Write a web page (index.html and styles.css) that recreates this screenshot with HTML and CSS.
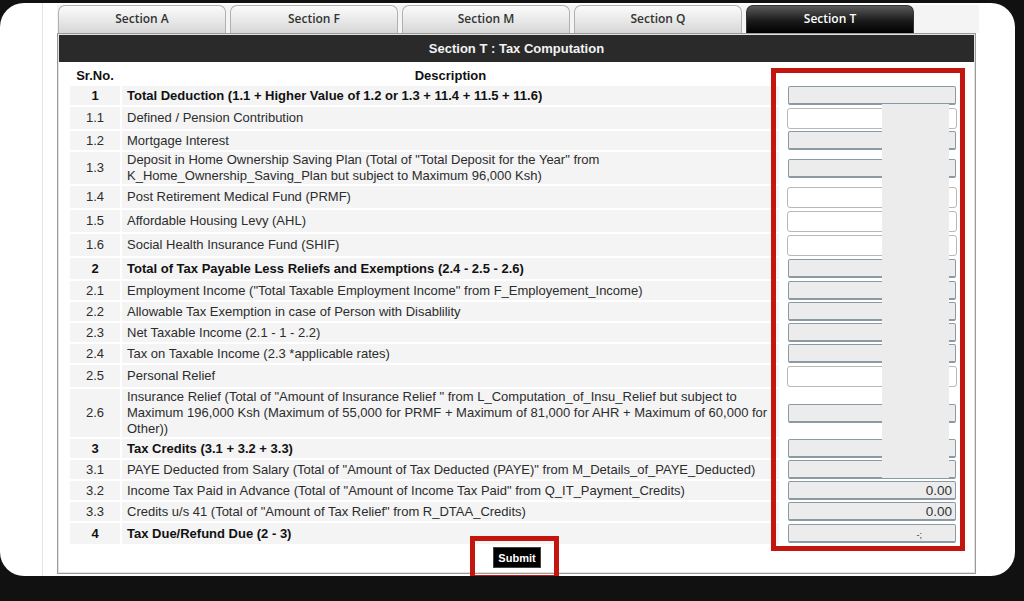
FILE: index.html
```html
<!DOCTYPE html>
<html>
<head>
<meta charset="utf-8">
<link rel="stylesheet" href="styles.css">
</head>
<body>
<div class="screen">
  <div class="page">
    <div class="tabs">
      <div class="tab">Section A</div>
      <div class="tab">Section F</div>
      <div class="tab">Section M</div>
      <div class="tab">Section Q</div>
      <div class="tab active">Section T</div>
    </div>
    <div class="panel">
      <div class="panel-head">Section T : Tax Computation</div>
      <div class="panel-body">
        <table class="grid">
          <thead>
            <tr><th class="sr">Sr.No.</th><th class="desc">Description</th><th class="val"></th></tr>
          </thead>
          <tbody>
            <tr class="b r20"><td class="sr">1</td><td class="desc">Total Deduction (1.1 + Higher Value of 1.2 or 1.3 + 11.4 + 11.5 + 11.6)</td><td class="val"><span class="ro"></span></td></tr>
            <tr class="r22"><td class="sr">1.1</td><td class="desc">Defined / Pension Contribution</td><td class="val"><span class="wi"></span></td></tr>
            <tr class="r20"><td class="sr">1.2</td><td class="desc">Mortgage Interest</td><td class="val"><span class="ro"></span></td></tr>
            <tr class="r32"><td class="sr">1.3</td><td class="desc">Deposit in Home Ownership Saving Plan (Total of "Total Deposit for the Year" from<br>K_Home_Ownership_Saving_Plan but subject to Maximum 96,000 Ksh)</td><td class="val"><span class="ro"></span></td></tr>
            <tr class="r22"><td class="sr">1.4</td><td class="desc">Post Retirement Medical Fund (PRMF)</td><td class="val"><span class="wi"></span></td></tr>
            <tr class="r22"><td class="sr">1.5</td><td class="desc">Affordable Housing Levy (AHL)</td><td class="val"><span class="wi"></span></td></tr>
            <tr class="r22"><td class="sr">1.6</td><td class="desc">Social Health Insurance Fund (SHIF)</td><td class="val"><span class="wi"></span></td></tr>
            <tr class="b r21"><td class="sr">2</td><td class="desc">Total of Tax Payable Less Reliefs and Exemptions (2.4 - 2.5 - 2.6)</td><td class="val"><span class="ro"></span></td></tr>
            <tr class="r20"><td class="sr">2.1</td><td class="desc">Employment Income ("Total Taxable Employment Income" from F_Employement_Income)</td><td class="val"><span class="ro"></span></td></tr>
            <tr class="r20"><td class="sr">2.2</td><td class="desc">Allowable Tax Exemption in case of Person with Disablility</td><td class="val"><span class="ro"></span></td></tr>
            <tr class="r20"><td class="sr">2.3</td><td class="desc">Net Taxable Income (2.1 - 1 - 2.2)</td><td class="val"><span class="ro"></span></td></tr>
            <tr class="r20"><td class="sr">2.4</td><td class="desc">Tax on Taxable Income (2.3 *applicable rates)</td><td class="val"><span class="ro"></span></td></tr>
            <tr class="r22"><td class="sr">2.5</td><td class="desc">Personal Relief</td><td class="val"><span class="wi"></span></td></tr>
            <tr class="r47"><td class="sr">2.6</td><td class="desc">Insurance Relief (Total of "Amount of Insurance Relief " from L_Computation_of_Insu_Relief but subject to<br>Maximum 196,000 Ksh (Maximum of 55,000 for PRMF + Maximum of 81,000 for AHR + Maximum of 60,000 for<br>Other))</td><td class="val"><span class="ro"></span></td></tr>
            <tr class="b r20"><td class="sr">3</td><td class="desc">Tax Credits (3.1 + 3.2 + 3.3)</td><td class="val"><span class="ro"></span></td></tr>
            <tr class="r20"><td class="sr">3.1</td><td class="desc">PAYE Deducted from Salary (Total of "Amount of Tax Deducted (PAYE)" from M_Details_of_PAYE_Deducted)</td><td class="val"><span class="ro"><span class="dot">.</span></span></td></tr>
            <tr class="r20"><td class="sr">3.2</td><td class="desc">Income Tax Paid in Advance (Total of "Amount of Income Tax Paid" from Q_IT_Payment_Credits)</td><td class="val"><span class="ro">0.00</span></td></tr>
            <tr class="r20"><td class="sr">3.3</td><td class="desc">Credits u/s 41 (Total of "Amount of Tax Relief" from R_DTAA_Credits)</td><td class="val"><span class="ro">0.00</span></td></tr>
            <tr class="b r21"><td class="sr">4</td><td class="desc">Tax Due/Refund Due (2 - 3)</td><td class="val"><span class="ro"><span class="tiny">-;</span></span></td></tr>
          </tbody>
        </table>
        <div class="actions">
          <button class="submit">Submit</button>
        </div>
        <div class="redact"></div>
        <div class="highlight"></div>
        <div class="highlight-submit"></div>
      </div>
    </div>
  </div>
</div>
<div class="bottom-bar"></div>
</body>
</html>
```

FILE: styles.css
```css
html, body {
  margin: 0;
  padding: 0;
  background: #111;
  height: 601px;
  overflow: hidden;
}

.screen {
  margin-top: 3px;
  width: 1015px;
  height: 573px;
  background: #fff;
  border-radius: 24px;
  overflow: hidden;
  font-family: "Liberation Sans", Arial, sans-serif;
}

.page {
  margin-left: 42px;
  height: 573px;
  border-left: 1px solid #e4e4e4;
  padding-left: 14px;
  box-sizing: border-box;
  padding-top: 2px;
}

.tabs {
  display: flex;
  gap: 4px;
  width: 922px;
  height: 28px;
  background: #f4f4f4;
  padding-left: 1px;
  box-sizing: border-box;
}

.tab {
  width: 168px;
  height: 28px;
  box-sizing: border-box;
  border: 1px solid #b0b0b0;
  border-bottom: none;
  border-radius: 7px 7px 0 0;
  background: linear-gradient(#fbfbfb, #e6e6e6 60%, #d6d6d6);
  font-family: "Open Sans", sans-serif;
  font-weight: 600;
  font-size: 12px;
  color: #333;
  text-align: center;
  line-height: 26px;
}

.tab.active {
  background: linear-gradient(#5a5a5a, #1a1a1a 55%, #000);
  border-color: #333;
  color: #fff;
}

.panel {
  width: 919px;
  box-sizing: border-box;
  border: 1px solid #9a9a9a;
  box-shadow: inset 0 0 0 1px #e2e2e2;
  background: #fff;
  padding: 1px;
  height: 541px;
}

.panel-head {
  height: 27px;
  background: #2a2a2a;
  color: #f2f2f2;
  font-weight: bold;
  font-size: 13px;
  text-align: center;
  line-height: 27px;
}

.panel-body {
  position: relative;
  padding: 3px 0 0 9px;
}

.grid {
  border-collapse: separate;
  border-spacing: 2px 2px;
  font-size: 13px;
  color: #2c2c2c;
  width: 896px;
  table-layout: fixed;
}

.grid th {
  font-weight: bold;
  color: #111;
  font-size: 13px;
  height: 17px;
  padding: 0;
}

.grid td {
  background: #f4f4f4;
  padding: 0 5px;
  line-height: 16px;
}

.grid .sr {
  width: 40px;
  text-align: center;
}

.grid th.sr { width: 50px; }

.grid .desc {
  width: 647px;
  white-space: nowrap;
  overflow: visible;
}

.grid th.desc { width: 657px; }

.grid td.val, .grid th.val {
  background: #fff;
  text-align: right;
  padding: 0 6px 0 0;
}

.grid tr.b td {
  font-weight: bold;
  color: #111;
}

.grid tr.r20 td { height: 19px; }
.grid tr.r21 td { height: 21px; }
.grid tr.r22 td { height: 22px; }
.grid tr.r32 td { height: 32px; }
.grid tr.r47 td { height: 47px; }

.ro {
  display: inline-block;
  vertical-align: middle;
  width: 168px;
  height: 19px;
  box-sizing: border-box;
  border: 1px solid #8c9aa4;
  border-bottom-width: 2px;
  border-radius: 2px;
  background: #ececec;
  text-align: right;
  padding-right: 3px;
  font-weight: normal;
  font-size: 13.5px;
  color: #333;
  line-height: 17px;
}

.wi {
  display: inline-block;
  vertical-align: middle;
  width: 170px;
  height: 21px;
  box-sizing: border-box;
  border: 1px solid #b8b8b8;
  border-radius: 3px;
  background: #fff;
  margin-right: -1px;
}

.dot { font-size: 8px; padding-right: 40px; }
.tiny { font-size: 9px; padding-right: 30px; }

.actions {
  display: flex;
  justify-content: flex-start;
  padding-left: 425px;
  margin-top: 1px;
}

.submit {
  background: #000;
  color: #fff;
  border: 1px solid #444;
  font-family: "Liberation Sans", Arial, sans-serif;
  font-weight: bold;
  font-size: 11px;
  height: 21px;
  width: 48px;
  padding: 0;
}

.highlight {
  position: absolute;
  left: 712px;
  top: 6px;
  width: 194px;
  height: 483px;
  box-sizing: border-box;
  border: 5px solid #c2160e;
  pointer-events: none;
}

.highlight-submit {
  position: absolute;
  left: 411px;
  top: 474px;
  width: 89px;
  height: 44px;
  box-sizing: border-box;
  border: 5px solid #c2160e;
  pointer-events: none;
}

.redact {
  position: absolute;
  left: 823px;
  top: 42px;
  width: 67px;
  height: 374px;
  background: #ececec;
}

.bottom-bar {
  height: 25px;
  background: #111;
}
```
